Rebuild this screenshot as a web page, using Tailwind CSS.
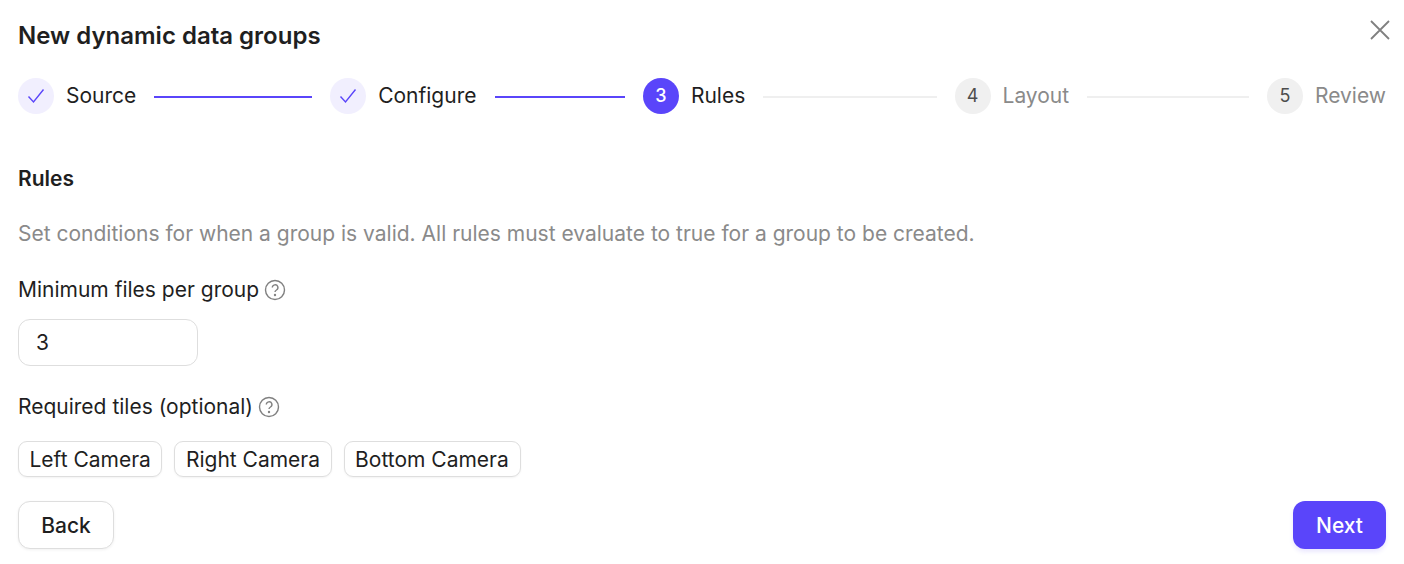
<!DOCTYPE html>
<html lang="en">
<head>
    <meta charset="UTF-8">
    <meta name="viewport" content="width=device-width, initial-scale=1.0">
    <title>New dynamic data groups</title>
    <script src="https://cdn.jsdelivr.net/npm/@tailwindcss/browser@4"></script>
</head>
<body class="bg-white font-['Inter',sans-serif] text-[#1f1f1f]">
    <div class="relative w-[1404px] h-[564px] overflow-hidden px-[18px]">
        <button class="absolute right-[14px] top-[20px] w-5 h-5 text-[#808080]">
            <svg viewBox="0 0 20 20" class="w-5 h-5" fill="none" stroke="currentColor" stroke-width="1.8"><path d="M1 1L19 19M19 1L1 19"/></svg>
        </button>
        <h1 class="pt-[21px] h-[78px] text-[24px] leading-[30px] font-semibold">New dynamic data groups</h1>

        <!-- stepper -->
        <div class="flex items-center h-[36px] text-[21px] leading-[34px]">
            <div class="flex shrink-0 items-center justify-center w-9 h-9 rounded-full bg-[#f1effe] text-[#5a45fa]">
                <svg viewBox="0 0 18 18" class="w-[18px] h-[18px]" fill="none" stroke="currentColor" stroke-width="1.4"><path d="M1.5 9.5L6.5 15L16.5 2.5"/></svg>
            </div>
            <span class="ml-3">Source</span>
            <div class="w-[158px] h-[2px] mx-[18px] mt-[2px] bg-[#5a45fa]"></div>
            <div class="flex shrink-0 items-center justify-center w-9 h-9 rounded-full bg-[#f1effe] text-[#5a45fa]">
                <svg viewBox="0 0 18 18" class="w-[18px] h-[18px]" fill="none" stroke="currentColor" stroke-width="1.4"><path d="M1.5 9.5L6.5 15L16.5 2.5"/></svg>
            </div>
            <span class="ml-3">Configure</span>
            <div class="w-[130px] h-[2px] ml-[18.6px] mr-[18px] mt-[2px] bg-[#5a45fa]"></div>
            <div class="flex shrink-0 items-center justify-center w-9 h-9 rounded-full bg-[#5a45fa] text-white text-[18px] font-medium">3</div>
            <span class="ml-3">Rules</span>
            <div class="w-[173.4px] h-[2px] mx-[18px] mt-[2px] bg-[#efefef]"></div>
            <div class="flex shrink-0 items-center justify-center w-9 h-9 rounded-full bg-[#f0f0f0] text-[#4d4d4d] text-[18px]">4</div>
            <span class="ml-3 text-[#8a8a8a]">Layout</span>
            <div class="w-[162px] h-[2px] mx-[18px] mt-[2px] bg-[#efefef]"></div>
            <div class="flex shrink-0 items-center justify-center w-9 h-9 rounded-full bg-[#f0f0f0] text-[#4d4d4d] text-[18px]">5</div>
            <span class="ml-3 text-[#8a8a8a]">Review</span>
        </div>

        <h2 class="mt-[51px] text-[21px] leading-[28px] font-semibold">Rules</h2>
        <p class="mt-[27px] text-[21px] leading-[28px] text-[#8a8a8a]">Set conditions for when a group is valid. All rules must evaluate to true for a group to be created.</p>

        <div class="mt-[28px] flex items-center gap-[5px] text-[21px] leading-[28px]">
            <span>Minimum files per group</span>
            <svg viewBox="0 0 22 22" class="w-[22px] h-[22px] text-[#808080]" fill="none" stroke="currentColor" stroke-width="1.4"><circle cx="11" cy="11" r="9.5"/><path d="M8.3 8.6a2.8 2.8 0 1 1 4.2 2.4c-.9.5-1.5 1-1.5 2.1"/><circle cx="11" cy="16" r=".5" fill="currentColor"/></svg>
        </div>
        <div class="mt-[15px] w-[180px] h-[47px] flex items-center px-[17px] rounded-[12px] border border-[#dedede] text-[21px]">3</div>

        <div class="mt-[27px] flex items-center gap-[5px] text-[21px] leading-[28px]">
            <span>Required tiles (optional)</span>
            <svg viewBox="0 0 22 22" class="w-[22px] h-[22px] text-[#808080]" fill="none" stroke="currentColor" stroke-width="1.4"><circle cx="11" cy="11" r="9.5"/><path d="M8.3 8.6a2.8 2.8 0 1 1 4.2 2.4c-.9.5-1.5 1-1.5 2.1"/><circle cx="11" cy="16" r=".5" fill="currentColor"/></svg>
        </div>
        <div class="mt-[20px] flex gap-3 text-[21px]">
            <span class="flex items-center h-9 pt-[2px] px-[10.5px] rounded-[9px] border border-[#dedede] shadow-[0_1px_2px_rgba(0,0,0,0.05)]">Left Camera</span>
            <span class="flex items-center h-9 pt-[2px] px-[10.5px] rounded-[9px] border border-[#dedede] shadow-[0_1px_2px_rgba(0,0,0,0.05)]">Right Camera</span>
            <span class="flex items-center h-9 pt-[2px] pl-[10.5px] pr-[11.5px] rounded-[9px] border border-[#dedede] shadow-[0_1px_2px_rgba(0,0,0,0.05)]">Bottom Camera</span>
        </div>

        <div class="mt-[24px] flex justify-between text-[21px]">
            <button class="w-[96px] h-[48px] pt-[2px] rounded-[12px] border border-[#dedede] bg-white font-medium shadow-[0_1px_3px_rgba(0,0,0,0.06)]">Back</button>
            <button class="w-[93px] h-[48px] pt-[2px] rounded-[12px] bg-[#5a45fa] text-white font-medium shadow-[0_3px_4px_rgba(90,69,250,0.12)]">Next</button>
        </div>
    </div>
</body>
</html>
